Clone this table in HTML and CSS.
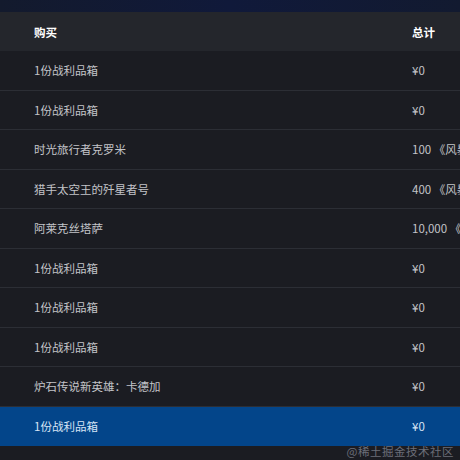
FILE: index.html
```html
<!DOCTYPE html>
<html lang="zh">
<head>
<meta charset="utf-8">
<link rel="stylesheet" href="styles.css">
</head>
<body>
<div class="page">
  <div class="topband"></div>
  <div class="table">
    <div class="row head"><div class="name">购买</div><div class="price">总计</div></div>
    <div class="row"><div class="name">1份战利品箱</div><div class="price">¥0</div></div>
    <div class="row"><div class="name">1份战利品箱</div><div class="price">¥0</div></div>
    <div class="row"><div class="name">时光旅行者克罗米</div><div class="price">100 《风暴英雄》代币</div></div>
    <div class="row"><div class="name">猎手太空王的歼星者号</div><div class="price">400 《风暴英雄》代币</div></div>
    <div class="row"><div class="name">阿莱克丝塔萨</div><div class="price">10,000 《风暴英雄》金币</div></div>
    <div class="row"><div class="name">1份战利品箱</div><div class="price">¥0</div></div>
    <div class="row"><div class="name">1份战利品箱</div><div class="price">¥0</div></div>
    <div class="row"><div class="name">1份战利品箱</div><div class="price">¥0</div></div>
    <div class="row"><div class="name">炉石传说新英雄：卡德加</div><div class="price">¥0</div></div>
    <div class="row active"><div class="name">1份战利品箱</div><div class="price">¥0</div></div>
  </div>
  <div class="watermark">@稀土掘金技术社区</div>
</div>
</body>
</html>
```
FILE: styles.css
```css
html, body {
  margin: 0;
  padding: 0;
  background: #1b1c22;
  overflow: hidden;
}
.page {
  position: relative;
  width: 460px;
  height: 460px;
  overflow: hidden;
  font-family: "Noto Sans CJK SC", "Noto Sans", sans-serif;
  font-size: 11.5px;
  color: #c3c4c9;
}
.topband {
  height: 12px;
  background: linear-gradient(90deg, #131a2d, #10193a 50%, #121a30);
}
.table {
  display: flex;
  flex-direction: column;
}
.row {
  display: flex;
  align-items: center;
  height: 38.5px;
  border-bottom: 1px solid #2c2e35;
  padding-left: 34px;
  white-space: nowrap;
  background: #1b1c22;
}
.row.head {
  height: 39px;
  border-bottom: none;
  background: #24262c;
  color: #ffffff;
  font-weight: 700;
}
.row.active {
  background: #03458a;
  border-bottom-color: #03458a;
  color: #d6e4f5;
}
.name {
  width: 378px;
  flex: none;
}
.price {
  flex: none;
}
.watermark {
  position: absolute;
  right: 6px;
  bottom: 1px;
  font-size: 11.5px;
  color: #6b6e78;
  letter-spacing: 0.5px;
}
```
